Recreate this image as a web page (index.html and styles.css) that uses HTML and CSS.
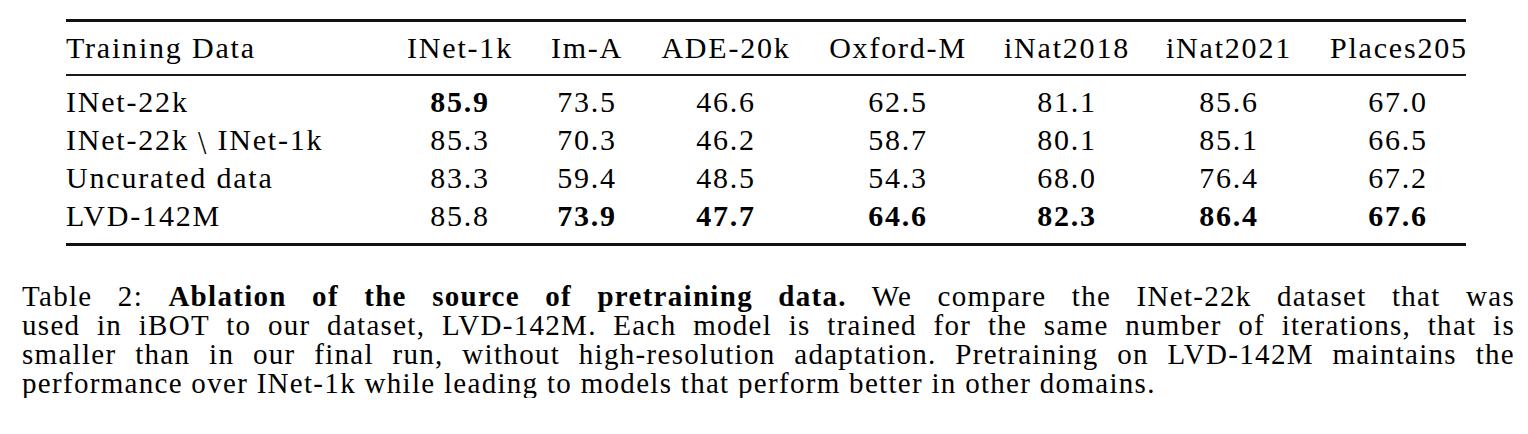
FILE: index.html
```html
<!DOCTYPE html>
<html>
<head>
<meta charset="utf-8">
<link rel="stylesheet" href="styles.css">
</head>
<body>
<div class="page">
  <div class="table">
    <div class="grid head">
      <div class="c first">Training Data</div>
      <div class="c">INet-1k</div>
      <div class="c">Im-A</div>
      <div class="c">ADE-20k</div>
      <div class="c">Oxford-M</div>
      <div class="c">iNat2018</div>
      <div class="c">iNat2021</div>
      <div class="c last">Places205</div>
    </div>
    <div class="midrule"></div>
    <div class="tbody">
      <div class="grid">
        <div class="c first">INet-22k</div>
        <div class="c"><b>85.9</b></div>
        <div class="c">73.5</div>
        <div class="c">46.6</div>
        <div class="c">62.5</div>
        <div class="c">81.1</div>
        <div class="c">85.6</div>
        <div class="c last">67.0</div>
      </div>
      <div class="grid">
        <div class="c first">INet-22k <span class="setminus">\</span> INet-1k</div>
        <div class="c">85.3</div>
        <div class="c">70.3</div>
        <div class="c">46.2</div>
        <div class="c">58.7</div>
        <div class="c">80.1</div>
        <div class="c">85.1</div>
        <div class="c last">66.5</div>
      </div>
      <div class="grid">
        <div class="c first">Uncurated data</div>
        <div class="c">83.3</div>
        <div class="c">59.4</div>
        <div class="c">48.5</div>
        <div class="c">54.3</div>
        <div class="c">68.0</div>
        <div class="c">76.4</div>
        <div class="c last">67.2</div>
      </div>
      <div class="grid">
        <div class="c first">LVD-142M</div>
        <div class="c">85.8</div>
        <div class="c"><b>73.9</b></div>
        <div class="c"><b>47.7</b></div>
        <div class="c"><b>64.6</b></div>
        <div class="c"><b>82.3</b></div>
        <div class="c"><b>86.4</b></div>
        <div class="c last"><b>67.6</b></div>
      </div>
    </div>
  </div>
  <div class="caption">
    <span class="line just">Table 2: <b>Ablation of the source of pretraining data.</b> We compare the INet-22k dataset that was</span>
    <span class="line just">used in iBOT to our dataset, LVD-142M. Each model is trained for the same number of iterations, that is</span>
    <span class="line just">smaller than in our final run, without high-resolution adaptation. Pretraining on LVD-142M maintains the</span>
    <span class="line">performance over INet-1k while leading to models that perform better in other domains.</span>
  </div>
</div>
</body>
</html>
```

FILE: styles.css
```css
html, body {
  margin: 0;
  padding: 0;
  background: #ffffff;
}

body {
  font-family: "Liberation Serif", "Times New Roman", serif;
  color: #000000;
}

.page {
  padding-top: 19px;
}

.table {
  margin-left: 66px;
  width: 1400px;
  font-size: 30px;
  letter-spacing: 1.8px;
  border-top: 3px solid #111111;
  border-bottom: 3px solid #111111;
}

.grid {
  display: grid;
  grid-template-columns: 322px 144px 110px 168px 176px 162px 162px 156px;
  line-height: 38px;
  white-space: nowrap;
}

.head {
  padding-top: 7px;
  padding-bottom: 7px;
}

.midrule {
  height: 0;
  border-top: 2px solid #1a1a1a;
}

.tbody {
  padding-top: 7px;
  padding-bottom: 8px;
}

.c {
  text-align: center;
}

.c.first {
  text-align: left;
}

.c.last {
  padding-left: 20px;
}

.c b {
  font-weight: 700;
}

.setminus {
  display: inline-block;
  transform: scaleY(1.15) translateY(2px);
}

.caption {
  margin-top: 36px;
  padding-left: 22px;
  padding-right: 13px;
  font-size: 29px;
  letter-spacing: 1.3px;
  line-height: 29px;
}

.line {
  display: block;
  text-align: left;
  white-space: nowrap;
}

.line.just {
  text-align: justify;
  text-align-last: justify;
  white-space: normal;
}

.caption b {
  font-weight: 700;
}
```
